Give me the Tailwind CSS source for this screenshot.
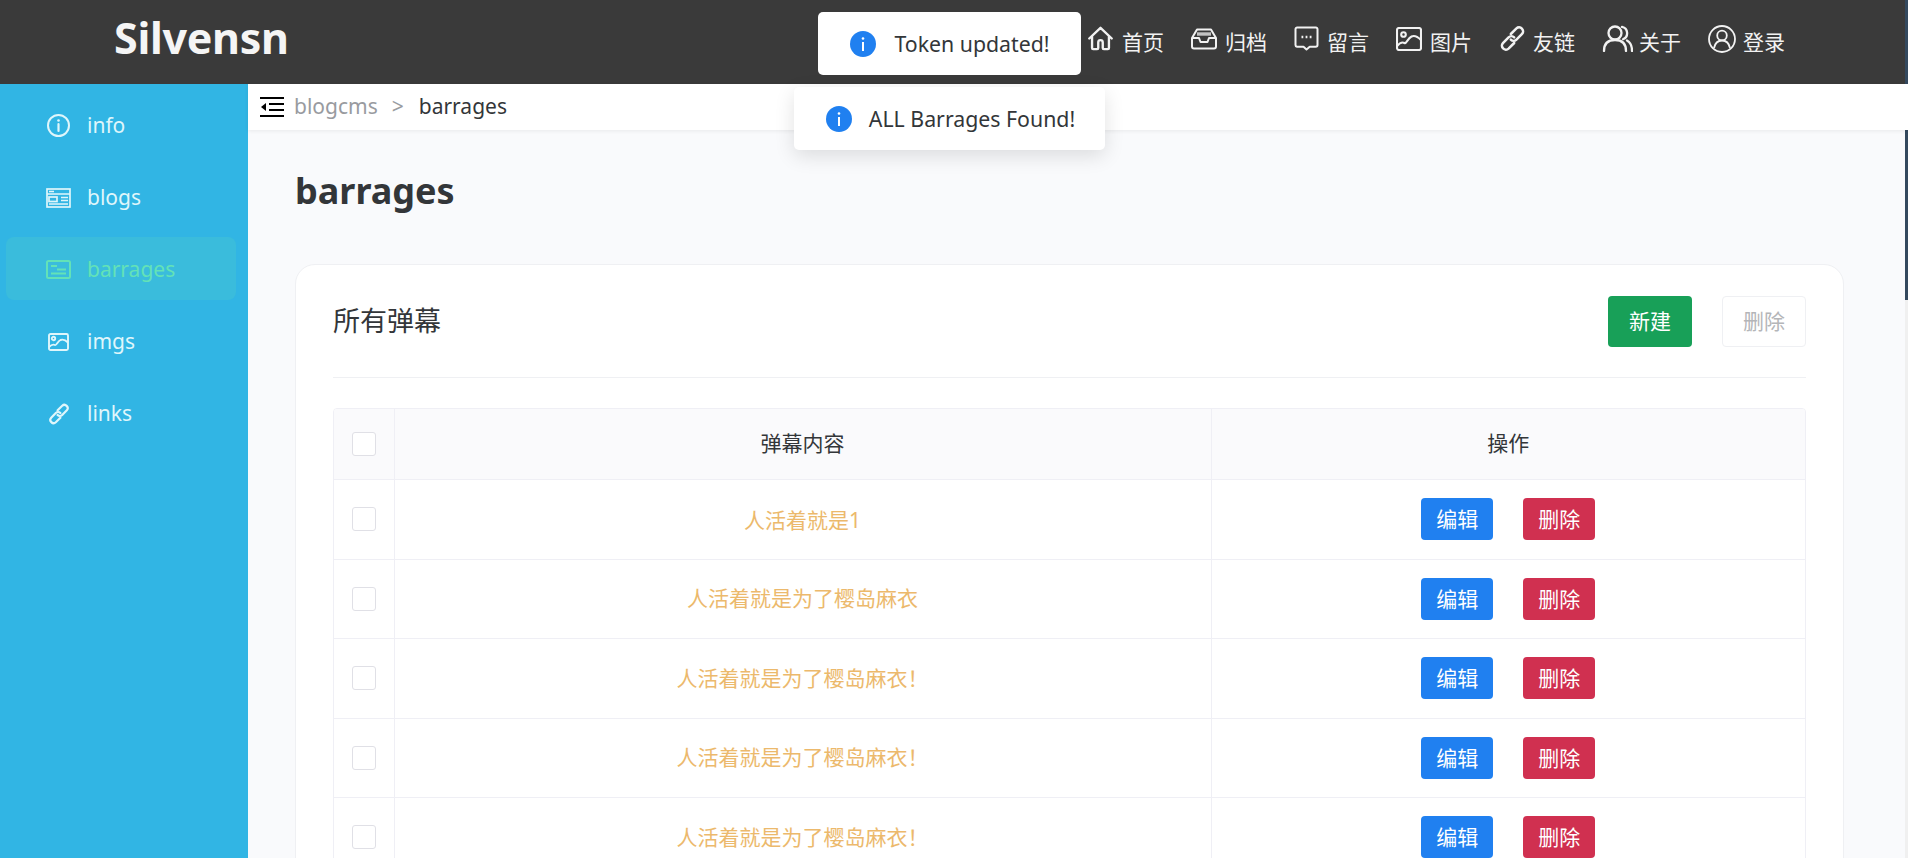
<!DOCTYPE html>
<html lang="zh-CN">
  <head>
    <meta charset="UTF-8" />
    <meta name="viewport" content="width=device-width, initial-scale=1.0" />
    <title>barrages</title>
    <script src="https://cdn.jsdelivr.net/npm/@tailwindcss/browser@4"></script>
  </head>
  <body class="font-['Noto_Sans','Noto_Sans_CJK_SC',sans-serif] text-[21px] text-[#333639]">
    <div class="relative flex flex-col h-[858px] overflow-hidden">
      <!-- top bar -->
      <header class="flex items-center justify-between h-[84px] shrink-0 bg-[#3a3a3a] text-[#f2f2f2] pl-[114px] pr-[123px]">
        <a href="#" class="text-[43px] font-bold text-[#f5f5f5] tracking-[-0.3px] mb-[8px]">Silvensn</a>
        <nav class="flex items-center gap-[27px] pt-[1px]">
          <a href="#" class="flex items-center gap-[8px]">
            <svg class="w-[27px] h-[27px] mb-[8px]" fill="none" stroke="currentColor" stroke-width="2.1" stroke-linecap="round" stroke-linejoin="round" viewBox="0 0 24 24"><path d="M2 12 12 2.5 22 12M4.5 10v10.5a1 1 0 0 0 1 1h3.5a1 1 0 0 0 1-1v-5a2 2 0 0 1 4 0v5a1 1 0 0 0 1 1h3.5a1 1 0 0 0 1-1V10" /></svg>
            <span>首页</span>
          </a>
          <a href="#" class="flex items-center gap-[8px]">
            <svg class="w-[26px] h-[22px] mb-[8px]" fill="none" stroke="currentColor" stroke-width="2" stroke-linejoin="round" viewBox="0 0 26 22"><path d="M6 1.5h14L25 10v8.5a2 2 0 0 1-2 2H3a2 2 0 0 1-2-2V10z" /><path d="M1 10h7l1.5 4h7L18 10h7" /><path d="M6 6h14" stroke-width="3.4" opacity=".75" /></svg>
            <span>归档</span>
          </a>
          <a href="#" class="flex items-center gap-[8px]">
            <svg class="w-[25px] h-[25px] mb-[8px]" fill="none" stroke="currentColor" stroke-width="2" stroke-linejoin="round" viewBox="0 0 25 25"><path d="M3 1.5h19A1.8 1.8 0 0 1 23.5 3v16a1.8 1.8 0 0 1-1.8 1.8h-6l-3.2 2.7-3-2.7H3A1.8 1.8 0 0 1 1.5 19V3A1.8 1.8 0 0 1 3 1.5z" /><path d="M7.5 11h1.8M11.6 11h1.8M15.7 11h1.8" stroke-width="2.4" /></svg>
            <span>留言</span>
          </a>
          <a href="#" class="flex items-center gap-[8px]">
            <svg class="w-[26px] h-[24px] mb-[8px]" fill="none" stroke="currentColor" stroke-width="2.1" stroke-linejoin="round" viewBox="0 0 26 24"><rect x="1" y="1" width="24" height="22" rx="2" /><circle cx="7.5" cy="7.5" r="2.3" /><path d="M1 19c3-3.5 5-4.5 7.5-3 2 1.2 3-4.5 7-6.5 3-1.5 6 0 9.5 3.5" /></svg>
            <span>图片</span>
          </a>
          <a href="#" class="flex items-center gap-[7px]">
            <svg class="w-[27px] h-[27px] mb-[8px]" fill="none" stroke="currentColor" stroke-width="2.2" stroke-linecap="round" viewBox="0 0 24 24"><path d="M10.5 8 15.5 3a3.54 3.54 0 0 1 5 5L15.5 13a3.54 3.54 0 0 1-5 0" /><path d="M13.5 16 8.5 21a3.54 3.54 0 0 1-5-5L8.5 11a3.54 3.54 0 0 1 5 0" /></svg>
            <span>友链</span>
          </a>
          <a href="#" class="flex items-center gap-[6px]">
            <svg class="w-[31px] h-[27px] mb-[8px]" fill="none" stroke="currentColor" stroke-width="2.3" stroke-linecap="round" viewBox="0 0 31 27"><circle cx="13" cy="8" r="6.5" /><path d="M2 26c0-8 4-11 11-11s11 3 11 11" /><path d="M20 1.8a6.5 6.5 0 0 1 1 12.4M25 15.5c3 1.5 5 4.5 5 10.5" /></svg>
            <span>关于</span>
          </a>
          <a href="#" class="flex items-center gap-[7px]">
            <svg class="w-[28px] h-[28px] mb-[8px]" fill="none" stroke="currentColor" stroke-width="1.8" viewBox="0 0 28 28"><circle cx="14" cy="14" r="13" /><circle cx="14" cy="10.5" r="4.8" /><path d="M6 23c1-4.5 4-7.5 8-7.5s7 3 8 7.5" /></svg>
            <span>登录</span>
          </a>
        </nav>
      </header>

      <div class="flex flex-1 min-h-0">
        <!-- sidebar -->
        <aside class="w-[248px] shrink-0 bg-[#31b5e4] text-[#dff6fb] pt-[9px] pl-[6px] pr-[12px] flex flex-col gap-[9px]">
          <a href="#" class="flex items-center gap-[16px] h-[63px] pl-[40px] pt-[2px] rounded-lg">
            <span class="w-[25px] flex justify-center">
              <svg class="w-[23px] h-[23px]" fill="none" stroke="currentColor" stroke-width="2" stroke-linecap="round" viewBox="0 0 23 23"><circle cx="11.5" cy="11.5" r="10.5" /><path d="M11.5 10v7" stroke-width="2.2" /><circle cx="11.5" cy="6.5" r="1.3" fill="currentColor" stroke="none" /></svg>
            </span>
            <span>info</span>
          </a>
          <a href="#" class="flex items-center gap-[16px] h-[63px] pl-[40px] pt-[2px] rounded-lg">
            <svg class="w-[25px] h-[20px]" fill="none" stroke="currentColor" stroke-width="1.7" viewBox="0 0 25 20"><rect x="1" y="1" width="23" height="18" /><path d="M1 6h23M3 3.5h5M15 9.5h7M15 12.5h7M3 16h19" /><rect x="3" y="9" width="8" height="4.5" /></svg>
            <span>blogs</span>
          </a>
          <a href="#" class="flex items-center gap-[16px] h-[63px] pl-[40px] pt-[2px] rounded-lg bg-[#3abcdc] text-[#63e2b7]">
            <svg class="w-[25px] h-[19px]" fill="none" stroke="currentColor" stroke-width="2" viewBox="0 0 25 19"><rect x="1" y="1" width="23" height="17" rx="1.5" /><path d="M5 6h6M11 9.5h9M5 13.500h15" /></svg>
            <span>barrages</span>
          </a>
          <a href="#" class="flex items-center gap-[16px] h-[63px] pl-[40px] pt-[2px] rounded-lg">
            <span class="w-[25px] flex justify-center">
              <svg class="w-[21px] h-[18px]" fill="none" stroke="currentColor" stroke-width="1.9" stroke-linejoin="round" viewBox="0 0 21 18"><rect x="1" y="1" width="19" height="16" rx="1.5" /><circle cx="5.5" cy="5.5" r="1.7" /><path d="M1 14c2.5-2.5 4-3 6-2 1.5.8 2.5-3.5 5.5-5 2.5-1 5 0 7.5 2.5" /></svg>
            </span>
            <span>imgs</span>
          </a>
          <a href="#" class="flex items-center gap-[16px] h-[63px] pl-[40px] pt-[2px] rounded-lg">
            <span class="w-[25px] flex justify-center">
              <svg class="w-[22px] h-[22px]" fill="none" stroke="currentColor" stroke-width="2.4" stroke-linecap="round" viewBox="0 0 24 24"><path d="M10.5 8 15.5 3a3.54 3.54 0 0 1 5 5L15.5 13a3.54 3.54 0 0 1-5 0" /><path d="M13.5 16 8.5 21a3.54 3.54 0 0 1-5-5L8.5 11a3.54 3.54 0 0 1 5 0" /></svg>
            </span>
            <span>links</span>
          </a>
        </aside>

        <!-- main -->
        <main class="flex-1 min-w-0 bg-[#f9fafc] flex flex-col">
          <div class="relative z-10 flex items-center h-[46px] shrink-0 bg-white shadow-[0_1px_4px_rgba(0,0,0,0.07)] pl-[12px]">
            <svg class="w-[24px] h-[20px] mb-[1px]" fill="none" stroke="#000" stroke-width="2" viewBox="0 0 24 20"><path d="M0 1h24M0 19h24M9 7h15M9 13h15" /><path d="M6 6v8l-5-4z" fill="#000" stroke="none" /></svg>
            <span class="ml-[10px] text-[#999ba0]">blogcms</span>
            <span class="ml-[14px] text-[#999ba0]">&gt;</span>
            <span class="ml-[15px] text-[#333639]">barrages</span>
          </div>

          <div class="pl-[47px] pr-[64px]">
            <h1 class="text-[36px] font-bold leading-[50px] mt-[36px] mb-[48px]">barrages</h1>

            <section class="bg-white border border-[#eff0f3] rounded-[20px] px-[37px] pt-[31px]">
              <div class="flex items-center justify-between pb-[30px] border-b border-[#eff0f3]">
                <h2 class="text-[27px]">所有弹幕</h2>
                <div class="flex gap-[30px]">
                  <button class="w-[84px] h-[51px] rounded bg-[#18a058] text-white">新建</button>
                  <button class="w-[84px] h-[51px] rounded border border-[#eff0f3] text-[#b4b5b8]">删除</button>
                </div>
              </div>

              <div class="mt-[30px] border border-[#efeff5] rounded overflow-hidden">
                <table class="w-full table-fixed border-collapse">
                  <colgroup>
                    <col class="w-[60px]" />
                    <col class="w-[817px]" />
                    <col />
                  </colgroup>
                  <thead class="bg-[#fafafc]">
                    <tr class="h-[70px] border-b border-[#efeff5]">
                      <th class="border-r border-[#efeff5]"><div class="w-[24px] h-[24px] mx-auto rounded-[3px] border border-[#e0e0e6] bg-white"></div></th>
                      <th class="border-r border-[#efeff5] font-normal">弹幕内容</th>
                      <th class="font-normal">操作</th>
                    </tr>
                  </thead>
                  <tbody class="text-[#ecb96c]">
                    <tr class="h-[80px] border-b border-[#efeff5]">
                      <td class="border-r border-[#efeff5]"><div class="w-[24px] h-[24px] mx-auto rounded-[3px] border border-[#e0e0e6]"></div></td>
                      <td class="border-r border-[#efeff5] text-center pt-[3px]">人活着就是1</td>
                      <td><div class="flex justify-center gap-[30px] text-white"><button class="w-[72px] h-[42px] rounded bg-[#2080f0] pt-[2px]">编辑</button><button class="w-[72px] h-[42px] rounded bg-[#d03050] pt-[2px]">删除</button></div></td>
                    </tr>
                    <tr class="h-[79px] border-b border-[#efeff5]">
                      <td class="border-r border-[#efeff5]"><div class="w-[24px] h-[24px] mx-auto rounded-[3px] border border-[#e0e0e6]"></div></td>
                      <td class="border-r border-[#efeff5] text-center">人活着就是为了樱岛麻衣</td>
                      <td><div class="flex justify-center gap-[30px] text-white"><button class="w-[72px] h-[42px] rounded bg-[#2080f0] pt-[2px]">编辑</button><button class="w-[72px] h-[42px] rounded bg-[#d03050] pt-[2px]">删除</button></div></td>
                    </tr>
                    <tr class="h-[80px] border-b border-[#efeff5]">
                      <td class="border-r border-[#efeff5]"><div class="w-[24px] h-[24px] mx-auto rounded-[3px] border border-[#e0e0e6]"></div></td>
                      <td class="border-r border-[#efeff5] text-center pt-[1px]">人活着就是为了樱岛麻衣！</td>
                      <td><div class="flex justify-center gap-[30px] text-white"><button class="w-[72px] h-[42px] rounded bg-[#2080f0] pt-[2px]">编辑</button><button class="w-[72px] h-[42px] rounded bg-[#d03050] pt-[2px]">删除</button></div></td>
                    </tr>
                    <tr class="h-[79px] border-b border-[#efeff5]">
                      <td class="border-r border-[#efeff5]"><div class="w-[24px] h-[24px] mx-auto rounded-[3px] border border-[#e0e0e6]"></div></td>
                      <td class="border-r border-[#efeff5] text-center pt-[1px]">人活着就是为了樱岛麻衣！</td>
                      <td><div class="flex justify-center gap-[30px] text-white"><button class="w-[72px] h-[42px] rounded bg-[#2080f0] pt-[2px]">编辑</button><button class="w-[72px] h-[42px] rounded bg-[#d03050] pt-[2px]">删除</button></div></td>
                    </tr>
                    <tr class="h-[80px] border-b border-[#efeff5]">
                      <td class="border-r border-[#efeff5]"><div class="w-[24px] h-[24px] mx-auto rounded-[3px] border border-[#e0e0e6]"></div></td>
                      <td class="border-r border-[#efeff5] text-center pt-[1px]">人活着就是为了樱岛麻衣！</td>
                      <td><div class="flex justify-center gap-[30px] text-white"><button class="w-[72px] h-[42px] rounded bg-[#2080f0] pt-[2px]">编辑</button><button class="w-[72px] h-[42px] rounded bg-[#d03050] pt-[2px]">删除</button></div></td>
                    </tr>
                  </tbody>
                </table>
              </div>
            </section>
          </div>
        </main>
      </div>

      <!-- toasts -->
      <div class="absolute z-20 top-[12px] left-0 w-[1899px] flex flex-col items-center gap-[12px] text-[21.3px] text-[#333639]">
        <div class="flex items-center h-[63px] pl-[32px] pr-[31px] gap-[18px] rounded-[5px] bg-white">
          <svg class="w-[26px] h-[26px]" viewBox="0 0 26 26"><circle cx="13" cy="13" r="13" fill="#2080f0" /><rect x="12" y="11" width="2" height="9" fill="#fff" /><circle cx="13" cy="7.5" r="1.3" fill="#fff" /></svg>
          <span>Token updated!</span>
        </div>
        <div class="flex items-center h-[63px] pl-[32px] pr-[30px] gap-[17px] rounded-[5px] bg-white shadow-[0_6px_20px_rgba(0,0,0,0.12)]">
          <svg class="w-[26px] h-[26px]" viewBox="0 0 26 26"><circle cx="13" cy="13" r="13" fill="#2080f0" /><rect x="12" y="11" width="2" height="9" fill="#fff" /><circle cx="13" cy="7.5" r="1.3" fill="#fff" /></svg>
          <span>ALL Barrages Found!</span>
        </div>
      </div>

      <!-- scrollbar -->
      <div class="absolute top-0 right-0 bottom-0 w-[3px] bg-[#f0f0f0]">
        <div class="h-[300px] bg-[#34495e]"></div>
      </div>
    </div>
  </body>
</html>
